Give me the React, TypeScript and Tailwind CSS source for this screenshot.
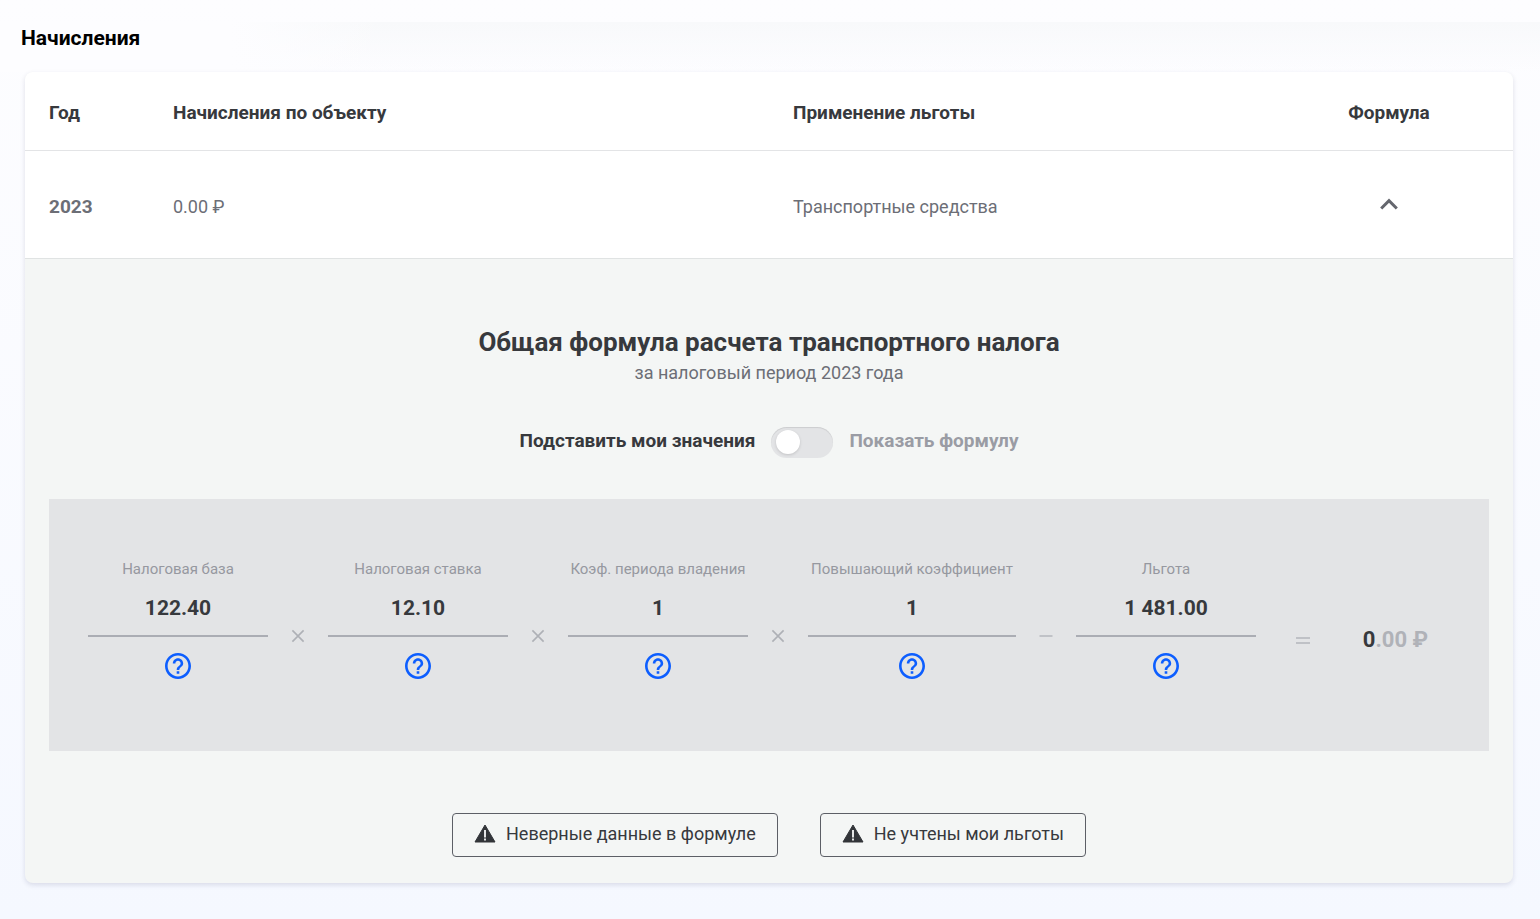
import { Fragment, useState } from "react";

const factors = [
  { label: "Налоговая база", value: "122.40", width: "min-w-[180px]", next: "times" },
  { label: "Налоговая ставка", value: "12.10", width: "min-w-[180px]", next: "times" },
  { label: "Коэф. периода владения", value: "1", width: "min-w-[180px]", next: "times" },
  { label: "Повышающий коэффициент", value: "1", width: "min-w-[208px]", next: "minus" },
  { label: "Льгота", value: "1 481.00", width: "min-w-[180px]", next: null },
];

function Times() {
  return (
    <svg viewBox="0 0 14 14" className="size-3.5" fill="none" stroke="#aeb0b6" strokeWidth="1.6" aria-hidden="true">
      <path d="M1.4 1.4 12.6 12.6M12.6 1.4 1.4 12.6" />
    </svg>
  );
}

function Minus() {
  return (
    <svg viewBox="0 0 14 14" className="size-3.5" fill="none" stroke="#c0c2c7" strokeWidth="2" aria-hidden="true">
      <path d="M0.5 7H13.5" />
    </svg>
  );
}

function Equals() {
  return (
    <svg viewBox="0 0 14 14" className="size-3.5" fill="none" stroke="#bfc1c6" strokeWidth="2" aria-hidden="true">
      <path d="M0 5H14M0 10H14" />
    </svg>
  );
}

function Question() {
  return (
    <svg viewBox="2 2 20 20" className="size-[26px]" fill="#0d5eff" aria-hidden="true">
      <path d="M11 18h2v-2h-2v2zm1-16C6.48 2 2 6.48 2 12s4.48 10 10 10 10-4.48 10-10S17.52 2 12 2zm0 18c-4.41 0-8-3.59-8-8s3.59-8 8-8 8 3.59 8 8-3.59 8-8 8zm0-14c-2.21 0-4 1.79-4 4h2c0-1.100.9-2 2-2s2 .9 2 2c0 2-3 1.750-3 5h2c0-2.250 3-2.500 3-5 0-2.210-1.790-4-4-4z" />
    </svg>
  );
}

function Warning() {
  return (
    <svg viewBox="0 0 22 19" className="h-[19px] w-[22px]" aria-hidden="true">
      <path d="M11 1 21 18H1Z" fill="#323539" stroke="#323539" strokeWidth="1" strokeLinejoin="round" />
      <path d="M10 6h2v7.500h-2zM10 14.500h2v2h-2z" fill="#e4e6e6" />
    </svg>
  );
}

export default function App() {
  const [open, setOpen] = useState(true);
  const [showFormula, setShowFormula] = useState(false);

  return (
    <main className="min-h-screen bg-linear-to-b from-[#fdfdff] to-[#f5f8ff] pt-[22px] pb-9 font-['Roboto','Liberation_Sans',sans-serif] text-[#37393d]">
      <div className="bg-linear-to-b from-[#f8f9fb] to-transparent">
        <div className="bg-linear-to-r from-[#fdfdff] from-15% to-transparent to-25%">
          <h1 className="px-[21px] pb-[18px] text-[21px] leading-8 font-bold text-black">Начисления</h1>
        </div>
      </div>
      <section className="mr-[27px] ml-[25px] overflow-hidden rounded-lg bg-[#f4f6f5] shadow-[0_2px_5px_rgba(40,40,90,0.14)]">
        <table className="w-full table-fixed border-collapse bg-white text-left text-lg leading-6">
          <colgroup>
            <col className="w-1/12" />
            <col className="w-5/12" />
            <col className="w-4/12" />
            <col className="w-2/12" />
          </colgroup>
          <thead>
            <tr className="h-[78px] border-b border-[#e3e4e6] text-[19px]">
              <th className="pt-1 pl-6">Год</th>
              <th className="pt-1 pl-6">Начисления по объекту</th>
              <th className="pt-1 pl-6">Применение льготы</th>
              <th className="pt-1 text-center">Формула</th>
            </tr>
          </thead>
          <tbody>
            <tr className="h-[108px] border-b border-[#e0e3e3] text-[#6c6e76]">
              <th className="pt-1.5 pl-6 text-[19px]">2023</th>
              <td className="pt-1.5 pl-6">0.00 ₽</td>
              <td className="pt-1.5 pl-6">Транспортные средства</td>
              <td className="text-center">
                <button
                  type="button"
                  aria-label="Показать расчет"
                  aria-expanded={open}
                  onClick={() => setOpen(!open)}
                  className="inline-flex size-8 items-center justify-center align-middle"
                >
                  <svg viewBox="0 0 18 12" className="h-3 w-[18px]" fill="none" stroke="#65676e" strokeWidth="3" aria-hidden="true">
                    <path d="M1.200 10.500 9 2.700l7.800 7.800" />
                  </svg>
                </button>
              </td>
            </tr>
          </tbody>
        </table>

        {open && (
          <div className="px-6 pt-[66px] pb-[26px]">
            <h2 className="text-center text-[26px] leading-[34px] font-bold">Общая формула расчета транспортного налога</h2>
            <p className="text-center text-lg leading-7 text-[#6c6e76]">за налоговый период 2023 года</p>

            <label className="mx-auto mt-10 flex w-fit items-center gap-4 text-[19px] leading-6 font-bold">
              <span className="pb-0.5">Подставить мои значения</span>
              <input
                type="checkbox"
                role="switch"
                checked={showFormula}
                onChange={() => setShowFormula(!showFormula)}
                className="h-[31px] w-[62px] appearance-none rounded-full bg-[#e3e4e6] px-[5px] py-[3px] shadow-[inset_0_1px_1px_rgba(0,0,0,0.1)] before:block before:size-6 before:rounded-full before:bg-white before:shadow-[0_1px_3px_rgba(0,0,0,0.15)] checked:before:ml-auto"
              />
              <span className="pb-0.5 text-[#9a9ca4]">Показать формулу</span>
            </label>

            <div className="mt-[41px] flex min-h-[252px] items-start bg-[#e3e4e6] pt-14 pl-[39px]">
              {factors.map((f) => (
                <Fragment key={f.label}>
                  <div className={`flex flex-col items-center ${f.width}`}>
                    <div className="text-[15px] leading-7 text-[#9698a0]">{f.label}</div>
                    <div className="flex h-[54px] w-full justify-center border-b-2 border-[#abadb4] pt-[11px] text-[21px] leading-7 font-bold">
                      {f.value}
                    </div>
                    <button type="button" aria-label={"Подробнее: " + f.label} className="mt-4">
                      <Question />
                    </button>
                  </div>
                  {f.next && (
                    <div className="mt-[74px] flex w-[60px] justify-center">{f.next === "times" ? <Times /> : <Minus />}</div>
                  )}
                </Fragment>
              ))}
              <div className="mt-[71px] flex flex-1 items-center pr-[61px] pl-10">
                <Equals />
                <div className="flex-1 text-right text-[22px] leading-7 font-bold text-[#b0b2b8]">
                  <span className="text-[#37393d]">0</span>.00 ₽
                </div>
              </div>
            </div>

            <div className="mt-[62px] flex justify-center gap-[42px] text-lg">
              <button type="button" className="flex h-11 items-center gap-2.5 rounded border border-[#5c5f66] px-[21px] pb-0.5">
                <Warning />
                Неверные данные в формуле
              </button>
              <button type="button" className="flex h-11 items-center gap-2.5 rounded border border-[#5c5f66] px-[21px] pb-0.5">
                <Warning />
                Не учтены мои льготы
              </button>
            </div>
          </div>
        )}
      </section>
    </main>
  );
}
